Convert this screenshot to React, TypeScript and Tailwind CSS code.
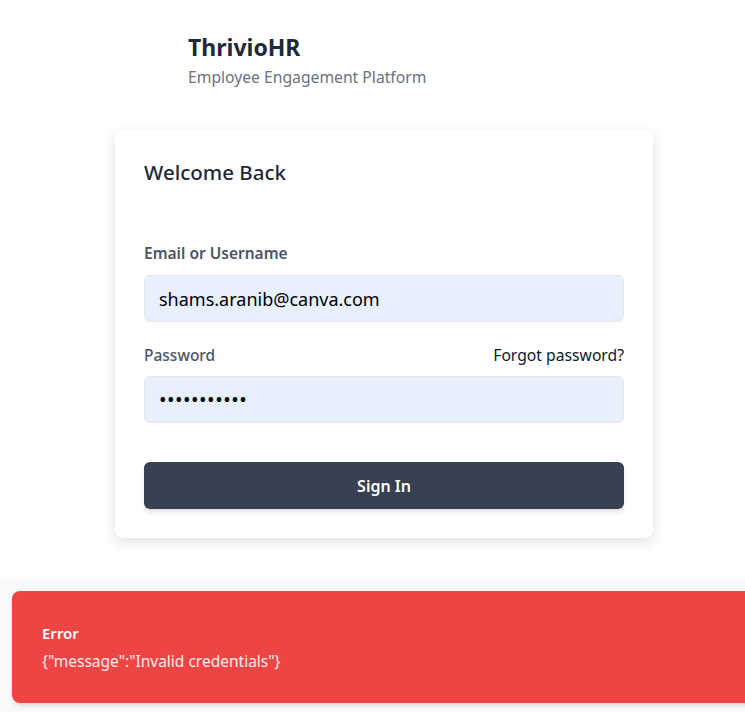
import React from 'react';

const font = { fontFamily: '"Noto Sans", "Open Sans", sans-serif' };

const App: React.FC = () => {
  return (
    <div className="w-full h-[712px] overflow-hidden bg-[#f9fafb]" style={font}>
      <div className="w-[768px]">
        {/* login page */}
        <div className="h-[577px] bg-white flex flex-col items-center">
          <div className="w-[538px] pt-[33px] pl-[73px]">
            <h1 className="text-[23px] leading-7 font-bold text-[#1f2937]">ThrivioHR</h1>
            <p className="mt-1 text-[15.7px] leading-6 text-[#6b7280]">Employee Engagement Platform</p>
          </div>

          <div className="mt-[41px] w-[538px] bg-white rounded-lg shadow-[0_4px_14px_rgba(0,0,0,0.12)] px-[29px] pt-7 pb-[29px]">
            <h2 className="text-[20.5px] leading-7 font-medium text-[#1f2937]">Welcome Back</h2>

            <label className="block mt-[57px] text-[15.5px] leading-5 font-semibold text-[#4b5563]">
              Email or Username
            </label>
            <input
              readOnly
              value="shams.aranib@canva.com"
              className="mt-3 w-full h-[47px] px-[14px] rounded-md border border-[#e5e7eb] bg-[#e8f0fe] text-[18px] text-black outline-none"
            />

            <div className="mt-[23px] flex items-center justify-between leading-5">
              <span className="text-[15.5px] font-medium text-[#4b5563]">Password</span>
              <span className="text-[15.7px] text-[#111827]">Forgot password?</span>
            </div>
            <input
              readOnly
              type="password"
              value="hunter22222"
              className="mt-[11px] w-full h-[47px] px-[14px] rounded-md border border-[#e5e7eb] bg-[#e8f0fe] text-[20px] tracking-[0.5px] text-black outline-none"
            />

            <button className="mt-[39px] w-full h-[47px] rounded-md bg-[#374151] text-white text-base font-semibold shadow-md">
              Sign In
            </button>
          </div>
        </div>

        {/* toast */}
        <div className="px-3 pt-[14px]">
          <div className="h-[112px] rounded-lg bg-[#ef4444] shadow-md px-[30px] flex flex-col justify-center">
            <p className="text-[15px] leading-5 font-semibold text-white">Error</p>
            <p className="mt-2 text-[15.5px] leading-5 text-white/90">{'{"message":"Invalid credentials"}'}</p>
          </div>
        </div>
      </div>
    </div>
  );
};

export default App;
